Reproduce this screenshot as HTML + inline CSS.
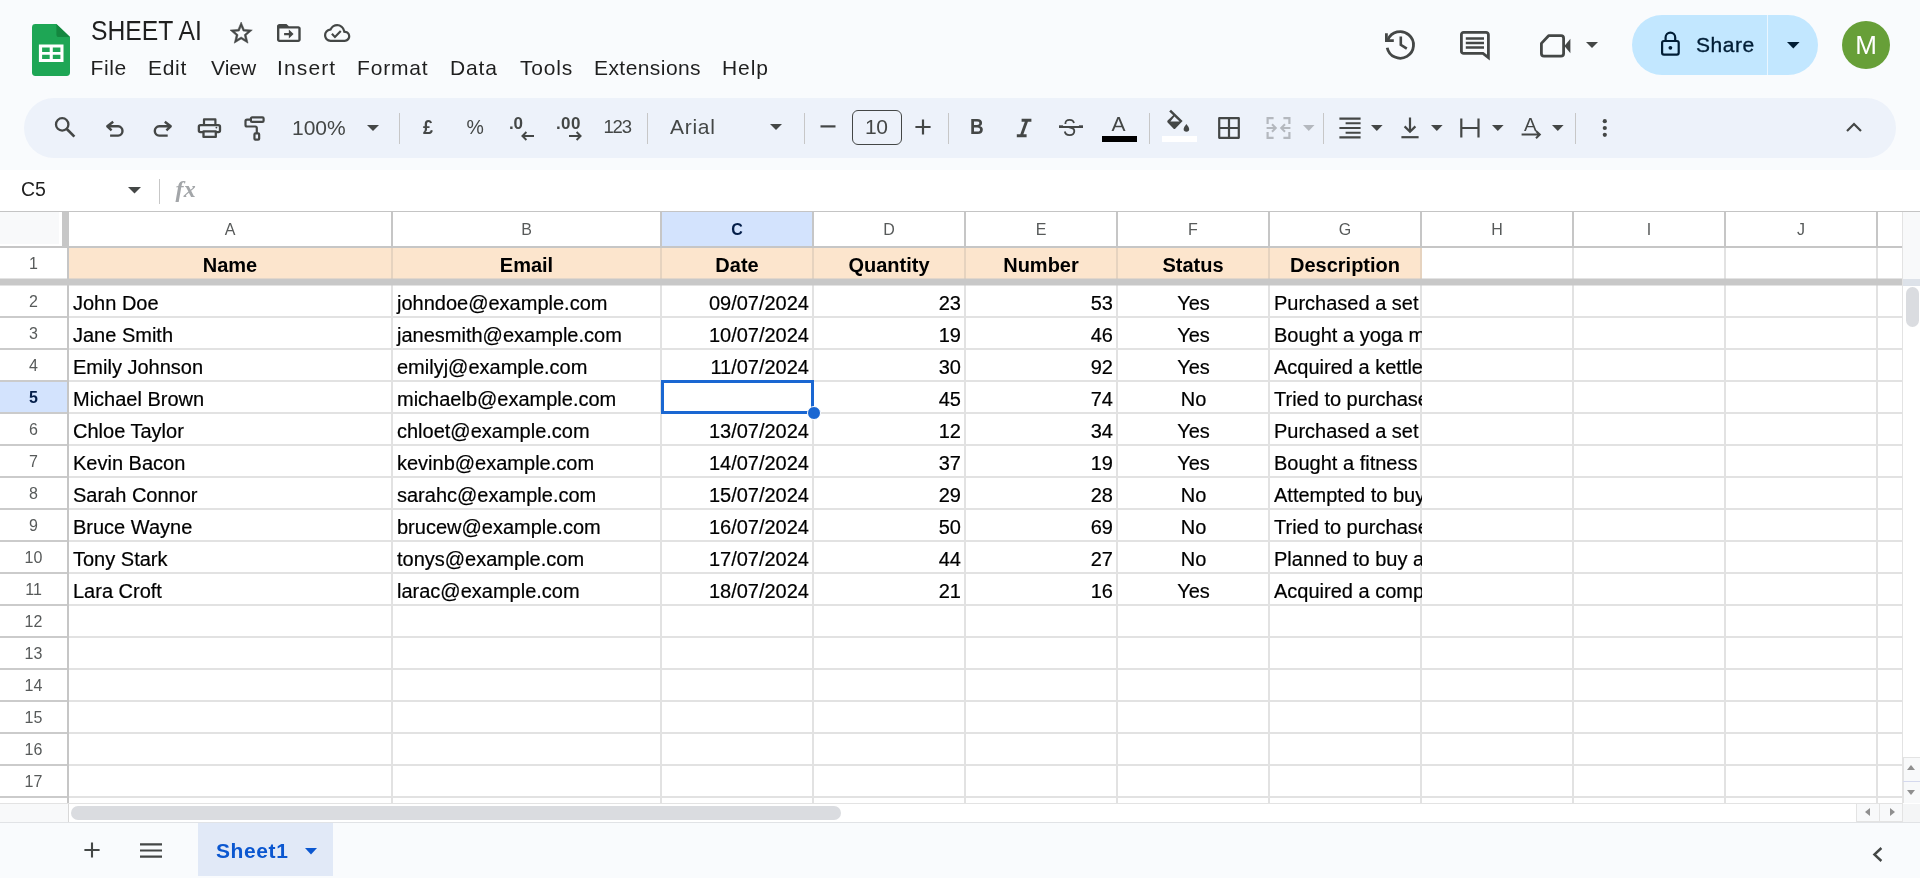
<!DOCTYPE html>
<html lang="en"><head><meta charset="utf-8"><title>SHEET AI - Google Sheets</title>
<style>
*{box-sizing:border-box;margin:0;padding:0}
html,body{width:1920px;height:878px;overflow:hidden;background:#f9fbfd;font-family:"Liberation Sans",Arial,sans-serif;color:#1f1f1f}
body{position:relative}
#app{position:absolute;left:0;top:0;width:1920px;height:878px;overflow:hidden;background:#f9fbfd;will-change:transform}
.abs{position:absolute}
svg{display:block;position:absolute;overflow:visible}
/* top */
#title{position:absolute;left:91px;top:14px;font-size:27px;line-height:34px;transform:scaleX(.915);transform-origin:left center;color:#1f1f1f;white-space:nowrap}
.menu{position:absolute;top:55px;font-size:21px;line-height:26px;letter-spacing:.28px;color:#1f1f1f;white-space:nowrap}
/* toolbar */
#tb{position:absolute;left:24px;top:98px;width:1872px;height:60px;border-radius:30px;background:#edf2fa}
.sep{position:absolute;top:113px;width:1px;height:31px;background:#c7c7c7}
.tbt{position:absolute;font-size:21px;line-height:26px;color:#444746;white-space:nowrap}
/* formula bar */
#fbar{position:absolute;left:0;top:170px;width:1920px;height:41px;background:#fff}
/* grid */
#grid{position:absolute;left:0;top:0;width:1902px;height:803px;overflow:hidden}
#gridbg{position:absolute;left:0;top:211px;width:1902px;height:592px;background:#fff}
.ch{position:absolute;top:212px;height:34px;background:#fff;text-align:center;font-size:16px;line-height:35px;color:#575a5a}
.ch.sel{background:#d3e3fd;color:#041e49;font-weight:700}
.hfill{position:absolute;top:248px;height:31px;background:#fce5cd}
.hc{position:absolute;top:247px;height:32px;text-align:center;font-weight:700;font-size:20px;line-height:37px;color:#000;white-space:nowrap;overflow:hidden}
.rn{position:absolute;left:0;width:67px;height:32px;text-align:center;font-size:16px;line-height:32px;color:#575a5a;background:#fff}
.rn.sel{background:#d3e3fd;color:#041e49;font-weight:700}
.c{position:absolute;height:32px;font-size:20px;line-height:35px;color:#000;-webkit-text-stroke:0.2px #000;white-space:nowrap;overflow:hidden;padding:0 3px 0 4px}
.c.ar{text-align:right}
.c.ac{text-align:center}
.hl{position:absolute;left:69px;width:1833px;height:2px;background:#e2e2e2}
.vl{position:absolute;top:248px;width:2px;height:555px;background:#e2e2e2}
.rhl{position:absolute;left:0;width:69px;height:2px;background:#cbcbcb}
.chl{position:absolute;top:212px;width:2px;height:35px;background:#c6c6c6}
.hdr-top{position:absolute;left:0;top:211px;width:1920px;height:1px;background:#c4c4c4}
.hdr-bot{position:absolute;left:0;top:246px;width:1902px;height:2px;background:#c6c6c6}
.rowhdr-right{position:absolute;left:67px;top:247px;width:2px;height:556px;background:#c6c6c6}
.corner{position:absolute;left:0;top:212px;width:59px;height:32px;background:#f8f9fa}
.corner-bar{position:absolute;left:62px;top:212px;width:7px;height:35px;background:#c7c7c7}
.freeze{position:absolute;left:0;top:279px;width:1902px;height:6px;background:#c8c8c8}
.fz{position:absolute;left:0;width:1902px;height:1px;background:rgba(200,200,200,.5)}
.hvl{position:absolute;top:248px;width:2px;height:31px;background:#e6d3bf}
.selbox{position:absolute;left:661px;top:380px;width:153px;height:34px;border:3px solid #1a67d2}
.seldot{position:absolute;left:807px;top:406px;width:14px;height:14px;border-radius:50%;background:#1a67d2;border:1px solid #fff}

</style></head>
<body>
<div id="app">
<svg style="left:32px;top:24px" width="38" height="52" viewBox="0 0 38 52" ><path d="M3.4 0 H24.4 L38 13 V48.6 A3.4 3.4 0 0 1 34.6 52 H3.4 A3.4 3.4 0 0 1 0 48.6 V3.4 A3.4 3.4 0 0 1 3.4 0Z" fill="#1ea655"/><path d="M24.4 0 L38 13 H27 A2.6 2.6 0 0 1 24.4 10.4Z" fill="#14873f"/><path d="M6.9 20.6 H31.5 V38.1 H6.9Z M10.1 23.6 V27.9 H17.7 V23.6Z M20.8 23.6 V27.9 H28.4 V23.6Z M10.1 30.7 V35.1 H17.7 V30.7Z M20.8 30.7 V35.1 H28.4 V30.7Z" fill="#fff" fill-rule="evenodd"/></svg>
<div id="title">SHEET AI</div>
<svg style="left:229.8px;top:22.2px" width="22.3" height="21.2" viewBox="2 2 20 19" preserveAspectRatio="none"><path fill="#444746" stroke="#444746" stroke-width="0.45" d="M22 9.24l-7.19-.62L12 2 9.19 8.63 2 9.24l5.46 4.73L5.82 21 12 17.27 18.18 21l-1.63-7.03L22 9.24zM12 15.4l-3.76 2.27 1-4.28-3.32-2.88 4.38-.38L12 6.1l1.71 4.04 4.38.38-3.32 2.88 1 4.28L12 15.4z"/></svg>
<svg style="left:277.2px;top:24px" width="23.7" height="17.9" viewBox="2 4 20 16" preserveAspectRatio="none"><path fill="#444746" d="M20 6h-8l-2-2H4c-1.1 0-1.99.9-1.99 2L2 18c0 1.1.9 2 2 2h16c1.1 0 2-.9 2-2V8c0-1.1-.9-2-2-2zm0 12H4V8h16v10zm-8-1l4-4-4-4v3H8v2h4v3z"/></svg>
<svg style="left:323.9px;top:24px" width="26.3" height="17.9" viewBox="0 4 24 16" preserveAspectRatio="none"><path fill="#444746" d="M19.35 10.04A7.49 7.49 0 0 0 12 4C9.11 4 6.6 5.64 5.35 8.04A5.994 5.994 0 0 0 0 14c0 3.31 2.69 6 6 6h13c2.76 0 5-2.24 5-5 0-2.64-2.05-4.78-4.65-4.96zM19 18H6c-2.21 0-4-1.79-4-4 0-2.05 1.53-3.76 3.56-3.97l1.07-.11.5-.95A5.469 5.469 0 0 1 12 6c2.62 0 4.88 1.86 5.39 4.43l.3 1.5 1.53.11A2.98 2.98 0 0 1 22 15c0 1.65-1.35 3-3 3zm-9-3.82l-2.09-2.09L6.5 13.5 10 17l6.01-6.01-1.41-1.41z"/></svg>
<div class="menu" style="left:90.5px;letter-spacing:0.58px">File</div>
<div class="menu" style="left:148px;letter-spacing:0.68px">Edit</div>
<div class="menu" style="left:211px;letter-spacing:0px">View</div>
<div class="menu" style="left:277px;letter-spacing:1.13px">Insert</div>
<div class="menu" style="left:357px;letter-spacing:0.83px">Format</div>
<div class="menu" style="left:450px;letter-spacing:0.83px">Data</div>
<div class="menu" style="left:520px;letter-spacing:0.78px">Tools</div>
<div class="menu" style="left:594px;letter-spacing:0.43px">Extensions</div>
<div class="menu" style="left:722px;letter-spacing:0.93px">Help</div>
<svg style="left:1384.4px;top:30px" width="31" height="30" viewBox="0 0 31 30" ><path d="M3.87 9.92 A13.3 13.3 0 1 1 3.19 17.67" fill="none" stroke="#444746" stroke-width="2.8"/><path d="M2.4 3.2 V10.6 H9.8" fill="none" stroke="#444746" stroke-width="2.8"/><path d="M16.8 6.4 V14.8 L22.8 18.6" fill="none" stroke="#444746" stroke-width="2.6"/></svg>
<svg style="left:1460px;top:31px" width="30" height="29" viewBox="0 0 30 29" ><path d="M3.6 1.4 H26 A2.4 2.4 0 0 1 28.4 3.8 V26.6 L23 22.4 H3.6 A2.2 2.2 0 0 1 1.4 20.2 V3.6 A2.2 2.2 0 0 1 3.6 1.4Z" fill="none" stroke="#444746" stroke-width="2.8" stroke-linejoin="miter"/><path d="M5.8 7.6 H24 M5.8 12 H24 M5.8 16.4 H24" stroke="#444746" stroke-width="2.5" fill="none"/></svg>
<svg style="left:1540px;top:34px" width="31" height="24" viewBox="0 0 31 24" ><path d="M8.6 1.7 H21 A2.6 2.6 0 0 1 23.6 4.3 V19.6 A2.6 2.6 0 0 1 21 22.2 H4 A2.6 2.6 0 0 1 1.4 19.6 V9.4 Z" fill="none" stroke="#444746" stroke-width="2.8" stroke-linejoin="round"/><path d="M24.4 12 L30.4 4.8 V19.2Z" fill="#444746"/></svg>
<svg style="left:1586px;top:42px" width="12" height="6" viewBox="0 0 12 6" ><path d="M0 0H12L6 6Z" fill="#444746"/></svg>
<div style="position:absolute;left:1632px;top:15px;width:186px;height:60px;border-radius:30px;background:#c2e7ff"></div>
<div style="position:absolute;left:1766.5px;top:15px;width:1.5px;height:60px;background:#eaf6ff"></div>
<svg style="left:1660px;top:31px" width="21" height="25" viewBox="0 0 21 25" ><rect x="2.1" y="10" width="16.6" height="13.6" rx="1.8" fill="none" stroke="#001d35" stroke-width="2.2"/><path d="M5.6 10 V6.4 A4.8 4.8 0 0 1 15.2 6.4 V10" fill="none" stroke="#001d35" stroke-width="2.2"/><circle cx="10.4" cy="16.8" r="1.9" fill="#001d35"/></svg>
<div style="position:absolute;left:1696px;top:32px;font-size:21px;line-height:26px;color:#001d35;-webkit-text-stroke:0.35px #001d35;letter-spacing:0.55px">Share</div>
<svg style="left:1787px;top:42px" width="12.6" height="6.6" viewBox="0 0 12.6 6.6" ><path d="M0 0H12.6L6.3 6.6Z" fill="#001d35"/></svg>
<div style="position:absolute;left:1842px;top:21px;width:48px;height:48px;border-radius:50%;background:#679f38;color:#fff;font-size:26px;line-height:49px;text-align:center">M</div>
<div id="tb"></div>
<svg style="left:53px;top:115px" width="24" height="24" viewBox="0 0 24 24"><circle cx="9.2" cy="9.4" r="6.2" fill="none" stroke="#444746" stroke-width="2.3"/><path d="M13.8 14L21.4 21.6" stroke="#444746" stroke-width="2.6" fill="none"/></svg>
<svg style="left:105px;top:119px" width="22" height="20" viewBox="0 0 22 20"><path d="M8.2 2.7 L2.3 7.3 L6.6 11.4 M2.8 7.3 H13.1 A4.69 4.69 0 0 1 13.1 16.66 H5.1" fill="none" stroke="#444746" stroke-width="2.4" stroke-linejoin="round"/></svg>
<svg style="left:151px;top:119px" width="22" height="20" viewBox="0 0 22 20"><path d="M13.8 2.7 L19.7 7.3 L15.4 11.4 M19.2 7.3 H8.2 A4.69 4.69 0 0 0 8.2 16.66 H16.7" fill="none" stroke="#444746" stroke-width="2.4" stroke-linejoin="round"/></svg>
<svg style="left:196px;top:116px" width="27" height="24" viewBox="0 0 27 24"><rect x="8" y="3.4" width="11.4" height="6" fill="none" stroke="#444746" stroke-width="2.2" stroke-linecap="butt" stroke-linejoin="round"/><rect x="2.85" y="9.05" width="21.15" height="7.1" rx="1.6" fill="#edf2fa" stroke="#444746" stroke-width="2.3"/><rect x="7.5" y="15.4" width="12.3" height="5.5" fill="#edf2fa" stroke="#444746" stroke-width="2.3" stroke-linejoin="round"/><circle cx="20.4" cy="11.6" r="0.9" fill="#444746"/></svg>
<svg style="left:243px;top:115px" width="24" height="28" viewBox="0 0 24 28"><rect x="7.9" y="2.4" width="12.7" height="4.5" rx="1.2" fill="none" stroke="#444746" stroke-width="2.2" stroke-linecap="butt" stroke-linejoin="round"/><path d="M7.9 4.7 H4 Q2.5 4.7 2.5 6.2 V10 Q2.5 11.5 4 11.5 H12.3 Q13.8 11.5 13.8 13 V18" fill="none" stroke="#444746" stroke-width="2.2" stroke-linecap="butt" stroke-linejoin="round"/><rect x="11.45" y="18.4" width="4.7" height="6.3" rx="1" fill="none" stroke="#444746" stroke-width="2.2" stroke-linecap="butt" stroke-linejoin="round"/></svg>
<div class="tbt" style="left:292px;top:115px;">100%</div>
<svg style="left:367px;top:124.5px" width="12" height="6" viewBox="0 0 12 6"><path d="M0 0H12L6.0 6Z" fill="#444746"/></svg>
<div class="sep" style="left:399px"></div>
<div class="tbt" style="left:422.5px;top:114px;font-size:19.5px;font-weight:700;transform:scaleX(.92);transform-origin:left">£</div>
<div class="tbt" style="left:466.5px;top:114px;font-size:19.5px;">%</div>
<div class="tbt" style="left:509px;top:111px;font-size:17px;font-weight:700;letter-spacing:-0.2px">.0</div>
<svg style="left:521px;top:130.5px" width="14" height="10" viewBox="0 0 14 10"><path d="M1.4 5 H13 M5.4 1 L1.4 5 L5.4 9" fill="none" stroke="#444746" stroke-width="1.9"/></svg>
<div class="tbt" style="left:556px;top:111px;font-size:17px;font-weight:700;letter-spacing:0.4px">.00</div>
<svg style="left:567.5px;top:130.5px" width="14" height="10" viewBox="0 0 14 10"><path d="M1 5 H12.6 M8.6 1 L12.6 5 L8.6 9" fill="none" stroke="#444746" stroke-width="1.9"/></svg>
<div class="tbt" style="left:603.5px;top:114px;font-size:18.5px;letter-spacing:-1.2px">123</div>
<div class="sep" style="left:647px"></div>
<div class="tbt" style="left:670px;top:114px;letter-spacing:0.7px">Arial</div>
<svg style="left:770px;top:123.5px" width="12" height="6" viewBox="0 0 12 6"><path d="M0 0H12L6.0 6Z" fill="#444746"/></svg>
<div class="sep" style="left:804px"></div>
<svg style="left:820px;top:125px" width="16" height="3" viewBox="0 0 16 3"><rect x="0.5" y="0.3" width="15" height="2.2" fill="#444746"/></svg>
<div style="position:absolute;left:852px;top:110px;width:50px;height:35px;border:1.5px solid #444746;border-radius:6px"></div>
<div class="tbt" style="left:865px;top:114px;letter-spacing:-0.5px">10</div>
<svg style="left:915px;top:119px" width="16" height="16" viewBox="0 0 16 16"><path d="M8 0.4 V15.6 M0.4 8 H15.6" stroke="#444746" stroke-width="2.2" fill="none"/></svg>
<div class="sep" style="left:948px"></div>
<div class="tbt" style="left:970px;top:114px;font-weight:700;font-size:22px;transform:scaleX(.86);transform-origin:left">B</div>
<svg style="left:1015px;top:118px" width="18" height="20" viewBox="0 0 18 20"><path d="M6.6 2.3 H16.4 M1.8 17.7 H11.6 M11.9 2.3 L6.3 17.7" stroke="#444746" stroke-width="2.9" fill="none"/></svg>
<div class="tbt" style="left:1062.6px;top:115px;font-size:24.5px;transform:scaleX(.8);transform-origin:left">S</div>
<svg style="left:1059px;top:125px" width="24" height="3" viewBox="0 0 24 3"><rect x="0" y="0.3" width="24" height="2" fill="#444746"/></svg>
<svg style="left:1063px;top:123.5px" width="16" height="2.2" viewBox="0 0 16 2.2"><rect x="0" y="0" width="16" height="2.2" fill="#edf2fa"/></svg>
<svg style="left:1059px;top:125.6px" width="24" height="2" viewBox="0 0 24 2"><rect x="0" y="0" width="24" height="2" fill="#444746"/></svg>
<div class="tbt" style="left:1111.5px;top:111px;font-size:21px;">A</div>
<div style="position:absolute;left:1102px;top:136px;width:35px;height:6px;background:#000"></div>
<div class="sep" style="left:1149px"></div>
<svg style="left:1166px;top:110px" width="25" height="23" viewBox="0 0 25 23"><path d="M3.2 1.4 L5 -0.2 L16.6 11 L9.4 18.6 Q8.4 19.6 7.4 18.6 L1.6 12.6 Q0.8 11.6 1.6 10.6 L7.2 5.2 Z M4.4 11.6 H13.6 L8.4 6.4 Z" fill="#444746" fill-rule="evenodd"/><path d="M20.4 14 Q23.2 17.4 23.2 19 A2.8 2.8 0 0 1 17.6 19 Q17.6 17.4 20.4 14Z" fill="#444746"/></svg>
<div style="position:absolute;left:1162px;top:136px;width:35px;height:6px;background:#fff"></div>
<svg style="left:1218px;top:117px" width="22" height="22" viewBox="0 0 22 22"><rect x="1.2" y="1.2" width="19.6" height="19.6" fill="none" stroke="#444746" stroke-width="2.2" stroke-linecap="butt" stroke-linejoin="round" stroke-linejoin="miter"/><path d="M11 1 V21 M1 11 H21" stroke="#444746" stroke-width="2.2"/></svg>
<svg style="left:1266px;top:117px" width="25" height="22" viewBox="0 0 25 22"><path d="M7.6 1.2 H1.6 V7 M1.6 15 V20.8 H7.6 M17.4 1.2 H23.4 V7 M23.4 15 V20.8 H17.4" fill="none" stroke="#b4b8be" stroke-width="2.2"/><path d="M0.6 11 H9.6 M6 7.2 L9.8 11 L6 14.8 M24.4 11 H15.4 M19 7.2 L15.2 11 L19 14.8" fill="none" stroke="#b4b8be" stroke-width="2"/></svg>
<svg style="left:1303px;top:125px" width="11.5" height="6" viewBox="0 0 11.5 6"><path d="M0 0H11.5L5.75 6Z" fill="#b4b8be"/></svg>
<div class="sep" style="left:1323px"></div>
<svg style="left:1339px;top:117px" width="22" height="22" viewBox="0 0 22 22"><path d="M0.4 1.6 H21.6 M6.6 6.3 H21.6 M0.4 11 H21.6 M6.6 15.7 H21.6 M0.4 20.4 H21.6" stroke="#444746" stroke-width="2.1" fill="none"/></svg>
<svg style="left:1371px;top:125px" width="11.6" height="6" viewBox="0 0 11.6 6"><path d="M0 0H11.6L5.8 6Z" fill="#444746"/></svg>
<svg style="left:1401px;top:117px" width="18" height="22" viewBox="0 0 18 22"><path d="M9 0.6 V14.4 M3.6 9.4 L9 14.8 L14.4 9.4" fill="none" stroke="#444746" stroke-width="2.2"/><path d="M0.4 20.2 H17.6" stroke="#444746" stroke-width="2.2"/></svg>
<svg style="left:1431px;top:125px" width="11.6" height="6" viewBox="0 0 11.6 6"><path d="M0 0H11.6L5.8 6Z" fill="#444746"/></svg>
<svg style="left:1460px;top:118px" width="20" height="20" viewBox="0 0 20 20"><path d="M1.3 0.6 V19.4 M18.5 0.6 V19.4 M1.3 10 H18.5" stroke="#444746" stroke-width="2.2" fill="none"/></svg>
<svg style="left:1492px;top:125px" width="11.6" height="6" viewBox="0 0 11.6 6"><path d="M0 0H11.6L5.8 6Z" fill="#444746"/></svg>
<div class="tbt" style="left:1524px;top:112px;font-size:19px;">A</div>
<svg style="left:1521px;top:131px" width="21" height="8" viewBox="0 0 21 8"><path d="M0.6 3.6 H18.8 M15 0 L18.8 3.6 L15 7.2" fill="none" stroke="#444746" stroke-width="2"/></svg>
<svg style="left:1552px;top:125px" width="11.6" height="6" viewBox="0 0 11.6 6"><path d="M0 0H11.6L5.8 6Z" fill="#444746"/></svg>
<div class="sep" style="left:1575px"></div>
<svg style="left:1602px;top:119px" width="6" height="18" viewBox="0 0 6 18"><circle cx="2.8" cy="2.2" r="2.1" fill="#444746"/><circle cx="2.8" cy="9" r="2.1" fill="#444746"/><circle cx="2.8" cy="15.8" r="2.1" fill="#444746"/></svg>
<svg style="left:1846px;top:122px" width="16" height="10" viewBox="0 0 16 10"><path d="M1 9 L8 2 L15 9" fill="none" stroke="#444746" stroke-width="2.2"/></svg>
<div id="fbar"></div>
<div style="position:absolute;left:21px;top:177px;font-size:19.5px;line-height:24px;color:#1f1f1f">C5</div>
<svg style="left:128px;top:187px" width="13" height="6.5" viewBox="0 0 13 6.5"><path d="M0 0H13L6.5 6.5Z" fill="#444746"/></svg>
<div style="position:absolute;left:158.5px;top:179px;width:1.5px;height:25px;background:#c7c7c7"></div>
<div style="position:absolute;left:175.5px;top:175px;font-family:'Liberation Serif',serif;font-style:italic;font-weight:700;font-size:24px;line-height:28px;color:#a3a6a9;letter-spacing:0.3px">fx</div>
<div id="gridbg"></div>
<div id="grid">
<div class="ch" style="left:69px;width:322px">A</div>
<div class="ch" style="left:393px;width:267px">B</div>
<div class="ch sel" style="left:662px;width:150px">C</div>
<div class="ch" style="left:814px;width:150px">D</div>
<div class="ch" style="left:966px;width:150px">E</div>
<div class="ch" style="left:1118px;width:150px">F</div>
<div class="ch" style="left:1270px;width:150px">G</div>
<div class="ch" style="left:1422px;width:150px">H</div>
<div class="ch" style="left:1574px;width:150px">I</div>
<div class="ch" style="left:1726px;width:150px">J</div>
<div class="hfill" style="left:69px;width:1351px"></div>
<div class="hc" style="left:69px;width:322px">Name</div>
<div class="hc" style="left:393px;width:267px">Email</div>
<div class="hc" style="left:662px;width:150px">Date</div>
<div class="hc" style="left:814px;width:150px">Quantity</div>
<div class="hc" style="left:966px;width:150px">Number</div>
<div class="hc" style="left:1118px;width:150px">Status</div>
<div class="hc" style="left:1270px;width:150px">Description</div>
<div class="rn" style="top:247px;height:32px;line-height:33px">1</div>
<div class="rn" style="top:286px">2</div>
<div class="rn" style="top:318px">3</div>
<div class="rn" style="top:350px">4</div>
<div class="rn sel" style="top:382px">5</div>
<div class="rn" style="top:414px">6</div>
<div class="rn" style="top:446px">7</div>
<div class="rn" style="top:478px">8</div>
<div class="rn" style="top:510px">9</div>
<div class="rn" style="top:542px">10</div>
<div class="rn" style="top:574px">11</div>
<div class="rn" style="top:606px">12</div>
<div class="rn" style="top:638px">13</div>
<div class="rn" style="top:670px">14</div>
<div class="rn" style="top:702px">15</div>
<div class="rn" style="top:734px">16</div>
<div class="rn" style="top:766px">17</div>
<div class="rn" style="top:798px">18</div>
<div class="c al" style="top:286px;left:69px;width:322px">John Doe</div>
<div class="c al" style="top:286px;left:393px;width:267px">johndoe@example.com</div>
<div class="c ar" style="top:286px;left:662px;width:150px">09/07/2024</div>
<div class="c ar" style="top:286px;left:814px;width:150px">23</div>
<div class="c ar" style="top:286px;left:966px;width:150px">53</div>
<div class="c ac" style="top:286px;left:1118px;width:150px">Yes</div>
<div class="c al" style="top:286px;left:1270px;width:152px;z-index:2;padding-right:0">Purchased a set of</div>
<div class="c al" style="top:318px;left:69px;width:322px">Jane Smith</div>
<div class="c al" style="top:318px;left:393px;width:267px">janesmith@example.com</div>
<div class="c ar" style="top:318px;left:662px;width:150px">10/07/2024</div>
<div class="c ar" style="top:318px;left:814px;width:150px">19</div>
<div class="c ar" style="top:318px;left:966px;width:150px">46</div>
<div class="c ac" style="top:318px;left:1118px;width:150px">Yes</div>
<div class="c al" style="top:318px;left:1270px;width:152px;z-index:2;padding-right:0">Bought a yoga mat</div>
<div class="c al" style="top:350px;left:69px;width:322px">Emily Johnson</div>
<div class="c al" style="top:350px;left:393px;width:267px">emilyj@example.com</div>
<div class="c ar" style="top:350px;left:662px;width:150px">11/07/2024</div>
<div class="c ar" style="top:350px;left:814px;width:150px">30</div>
<div class="c ar" style="top:350px;left:966px;width:150px">92</div>
<div class="c ac" style="top:350px;left:1118px;width:150px">Yes</div>
<div class="c al" style="top:350px;left:1270px;width:152px;z-index:2;padding-right:0">Acquired a kettlebell</div>
<div class="c al" style="top:382px;left:69px;width:322px">Michael Brown</div>
<div class="c al" style="top:382px;left:393px;width:267px">michaelb@example.com</div>
<div class="c ar" style="top:382px;left:814px;width:150px">45</div>
<div class="c ar" style="top:382px;left:966px;width:150px">74</div>
<div class="c ac" style="top:382px;left:1118px;width:150px">No</div>
<div class="c al" style="top:382px;left:1270px;width:152px;z-index:2;padding-right:0">Tried to purchase a</div>
<div class="c al" style="top:414px;left:69px;width:322px">Chloe Taylor</div>
<div class="c al" style="top:414px;left:393px;width:267px">chloet@example.com</div>
<div class="c ar" style="top:414px;left:662px;width:150px">13/07/2024</div>
<div class="c ar" style="top:414px;left:814px;width:150px">12</div>
<div class="c ar" style="top:414px;left:966px;width:150px">34</div>
<div class="c ac" style="top:414px;left:1118px;width:150px">Yes</div>
<div class="c al" style="top:414px;left:1270px;width:152px;z-index:2;padding-right:0">Purchased a set of</div>
<div class="c al" style="top:446px;left:69px;width:322px">Kevin Bacon</div>
<div class="c al" style="top:446px;left:393px;width:267px">kevinb@example.com</div>
<div class="c ar" style="top:446px;left:662px;width:150px">14/07/2024</div>
<div class="c ar" style="top:446px;left:814px;width:150px">37</div>
<div class="c ar" style="top:446px;left:966px;width:150px">19</div>
<div class="c ac" style="top:446px;left:1118px;width:150px">Yes</div>
<div class="c al" style="top:446px;left:1270px;width:152px;z-index:2;padding-right:0">Bought a fitness tracker</div>
<div class="c al" style="top:478px;left:69px;width:322px">Sarah Connor</div>
<div class="c al" style="top:478px;left:393px;width:267px">sarahc@example.com</div>
<div class="c ar" style="top:478px;left:662px;width:150px">15/07/2024</div>
<div class="c ar" style="top:478px;left:814px;width:150px">29</div>
<div class="c ar" style="top:478px;left:966px;width:150px">28</div>
<div class="c ac" style="top:478px;left:1118px;width:150px">No</div>
<div class="c al" style="top:478px;left:1270px;width:152px;z-index:2;padding-right:0">Attempted to buy a</div>
<div class="c al" style="top:510px;left:69px;width:322px">Bruce Wayne</div>
<div class="c al" style="top:510px;left:393px;width:267px">brucew@example.com</div>
<div class="c ar" style="top:510px;left:662px;width:150px">16/07/2024</div>
<div class="c ar" style="top:510px;left:814px;width:150px">50</div>
<div class="c ar" style="top:510px;left:966px;width:150px">69</div>
<div class="c ac" style="top:510px;left:1118px;width:150px">No</div>
<div class="c al" style="top:510px;left:1270px;width:152px;z-index:2;padding-right:0">Tried to purchase a</div>
<div class="c al" style="top:542px;left:69px;width:322px">Tony Stark</div>
<div class="c al" style="top:542px;left:393px;width:267px">tonys@example.com</div>
<div class="c ar" style="top:542px;left:662px;width:150px">17/07/2024</div>
<div class="c ar" style="top:542px;left:814px;width:150px">44</div>
<div class="c ar" style="top:542px;left:966px;width:150px">27</div>
<div class="c ac" style="top:542px;left:1118px;width:150px">No</div>
<div class="c al" style="top:542px;left:1270px;width:152px;z-index:2;padding-right:0">Planned to buy a</div>
<div class="c al" style="top:574px;left:69px;width:322px">Lara Croft</div>
<div class="c al" style="top:574px;left:393px;width:267px">larac@example.com</div>
<div class="c ar" style="top:574px;left:662px;width:150px">18/07/2024</div>
<div class="c ar" style="top:574px;left:814px;width:150px">21</div>
<div class="c ar" style="top:574px;left:966px;width:150px">16</div>
<div class="c ac" style="top:574px;left:1118px;width:150px">Yes</div>
<div class="c al" style="top:574px;left:1270px;width:152px;z-index:2;padding-right:0">Acquired a complete</div>
<div class="hl" style="top:316px"></div>
<div class="hl" style="top:348px"></div>
<div class="hl" style="top:380px"></div>
<div class="hl" style="top:412px"></div>
<div class="hl" style="top:444px"></div>
<div class="hl" style="top:476px"></div>
<div class="hl" style="top:508px"></div>
<div class="hl" style="top:540px"></div>
<div class="hl" style="top:572px"></div>
<div class="hl" style="top:604px"></div>
<div class="hl" style="top:636px"></div>
<div class="hl" style="top:668px"></div>
<div class="hl" style="top:700px"></div>
<div class="hl" style="top:732px"></div>
<div class="hl" style="top:764px"></div>
<div class="hl" style="top:796px"></div>
<div class="vl" style="left:391px"></div>
<div class="vl" style="left:660px"></div>
<div class="vl" style="left:812px"></div>
<div class="vl" style="left:964px"></div>
<div class="vl" style="left:1116px"></div>
<div class="vl" style="left:1268px"></div>
<div class="vl" style="left:1420px"></div>
<div class="vl" style="left:1572px"></div>
<div class="vl" style="left:1724px"></div>
<div class="vl" style="left:1876px"></div>
<div class="rowhdr-lines"></div>
<div class="rhl" style="top:316px"></div>
<div class="rhl" style="top:348px"></div>
<div class="rhl" style="top:380px"></div>
<div class="rhl" style="top:412px"></div>
<div class="rhl" style="top:444px"></div>
<div class="rhl" style="top:476px"></div>
<div class="rhl" style="top:508px"></div>
<div class="rhl" style="top:540px"></div>
<div class="rhl" style="top:572px"></div>
<div class="rhl" style="top:604px"></div>
<div class="rhl" style="top:636px"></div>
<div class="rhl" style="top:668px"></div>
<div class="rhl" style="top:700px"></div>
<div class="rhl" style="top:732px"></div>
<div class="rhl" style="top:764px"></div>
<div class="rhl" style="top:796px"></div>
<div class="chl" style="left:391px"></div>
<div class="chl" style="left:660px"></div>
<div class="chl" style="left:812px"></div>
<div class="chl" style="left:964px"></div>
<div class="chl" style="left:1116px"></div>
<div class="chl" style="left:1268px"></div>
<div class="chl" style="left:1420px"></div>
<div class="chl" style="left:1572px"></div>
<div class="chl" style="left:1724px"></div>
<div class="chl" style="left:1876px"></div>
<div class="hdr-top"></div><div class="hdr-bot"></div><div class="rowhdr-right"></div>
<div class="corner"></div><div class="corner-bar"></div>
<div class="hvl" style="left:391px"></div>
<div class="hvl" style="left:660px"></div>
<div class="hvl" style="left:812px"></div>
<div class="hvl" style="left:964px"></div>
<div class="hvl" style="left:1116px"></div>
<div class="hvl" style="left:1268px"></div>
<div class="hvl" style="left:1420px"></div>
<div class="freeze"></div><div class="fz" style="top:278px"></div><div class="fz" style="top:285px"></div>
<div class="selbox"></div><div class="seldot"></div>
</div>
<div style="position:absolute;left:1902px;top:212px;width:18px;height:592px;background:#fff;"></div>
<div style="position:absolute;left:1902px;top:212px;width:1px;height:592px;background:#e3e3e3;"></div>
<div style="position:absolute;left:1903px;top:212px;width:17px;height:67px;background:#f8f9fa;"></div>
<div style="position:absolute;left:1902px;top:211px;width:18px;height:1px;background:#c4c4c4;"></div>
<div style="position:absolute;left:1903px;top:279px;width:17px;height:7px;background:#dde2e9;"></div>
<div style="position:absolute;left:1905.5px;top:287px;width:13px;height:39.5px;background:#dadce0;border-radius:6.5px"></div>
<div style="position:absolute;left:1903px;top:757px;width:17px;height:47px;background:#f8f9fa;border:1px solid #e3e3e3;border-right:0"></div>
<div style="position:absolute;left:1903px;top:780.5px;width:17px;height:1px;background:#d5d9ee;"></div>
<svg style="left:1907px;top:765px" width="8" height="5" viewBox="0 0 8 5" ><path d="M0 5H8L4 0Z" fill="#8f8f8f"/></svg>
<svg style="left:1907px;top:790px" width="8" height="5" viewBox="0 0 8 5" ><path d="M0 0H8L4 5Z" fill="#8f8f8f"/></svg>
<div style="position:absolute;left:0px;top:803px;width:1920px;height:20px;background:#fff;"></div>
<div style="position:absolute;left:0px;top:803px;width:1903px;height:1px;background:#e3e3e3;"></div>
<div style="position:absolute;left:0px;top:804px;width:68px;height:18px;background:#f8f9fa;"></div>
<div style="position:absolute;left:68px;top:804px;width:1px;height:18px;background:#d8d8d8;"></div>
<div style="position:absolute;left:71px;top:806px;width:770px;height:13.5px;background:#dadce0;border-radius:7px"></div>
<div style="position:absolute;left:1856px;top:804px;width:24px;height:18px;background:#f8f9fa;border:1px solid #e3e3e3;border-top:0"></div>
<div style="position:absolute;left:1880px;top:804px;width:23px;height:18px;background:#f8f9fa;border:1px solid #e3e3e3;border-top:0;border-left:0"></div>
<div style="position:absolute;left:1903px;top:804px;width:17px;height:18px;background:#f4f5f6;"></div>
<svg style="left:1864.5px;top:808px" width="5" height="8" viewBox="0 0 5 8" ><path d="M5 0V8L0 4Z" fill="#8f8f8f"/></svg>
<svg style="left:1889.5px;top:808px" width="5" height="8" viewBox="0 0 5 8" ><path d="M0 0V8L5 4Z" fill="#8f8f8f"/></svg>
<div style="position:absolute;left:0px;top:822px;width:1920px;height:1px;background:#e1e3e6;"></div>
<div style="position:absolute;left:0px;top:823px;width:1920px;height:55px;background:#f9fbfd;"></div>
<svg style="left:84px;top:842px" width="16" height="16" viewBox="0 0 16 16" ><path d="M8 0.4V15.6M0.4 8H15.6" stroke="#444746" stroke-width="2.1" fill="none"/></svg>
<svg style="left:140px;top:843px" width="22" height="15" viewBox="0 0 22 15" ><path d="M0 1.4H22M0 7.5H22M0 13.6H22" stroke="#444746" stroke-width="2.1" fill="none"/></svg>
<div style="position:absolute;left:198px;top:823px;width:135px;height:53px;background:#e1e9f7;"></div>
<div style="position:absolute;left:216px;top:838px;font-size:21px;line-height:26px;font-weight:700;color:#0b57d0;letter-spacing:0.6px;white-space:nowrap">Sheet1</div>
<svg style="left:304.5px;top:848px" width="12" height="6.4" viewBox="0 0 12 6.4" ><path d="M0 0H12L6 6.4Z" fill="#0b57d0"/></svg>
<svg style="left:1872px;top:846.5px" width="11" height="15" viewBox="0 0 11 15" ><path d="M9.4 1L2.4 7.5L9.4 14" fill="none" stroke="#444746" stroke-width="2.4"/></svg>
</div>
</body></html>
